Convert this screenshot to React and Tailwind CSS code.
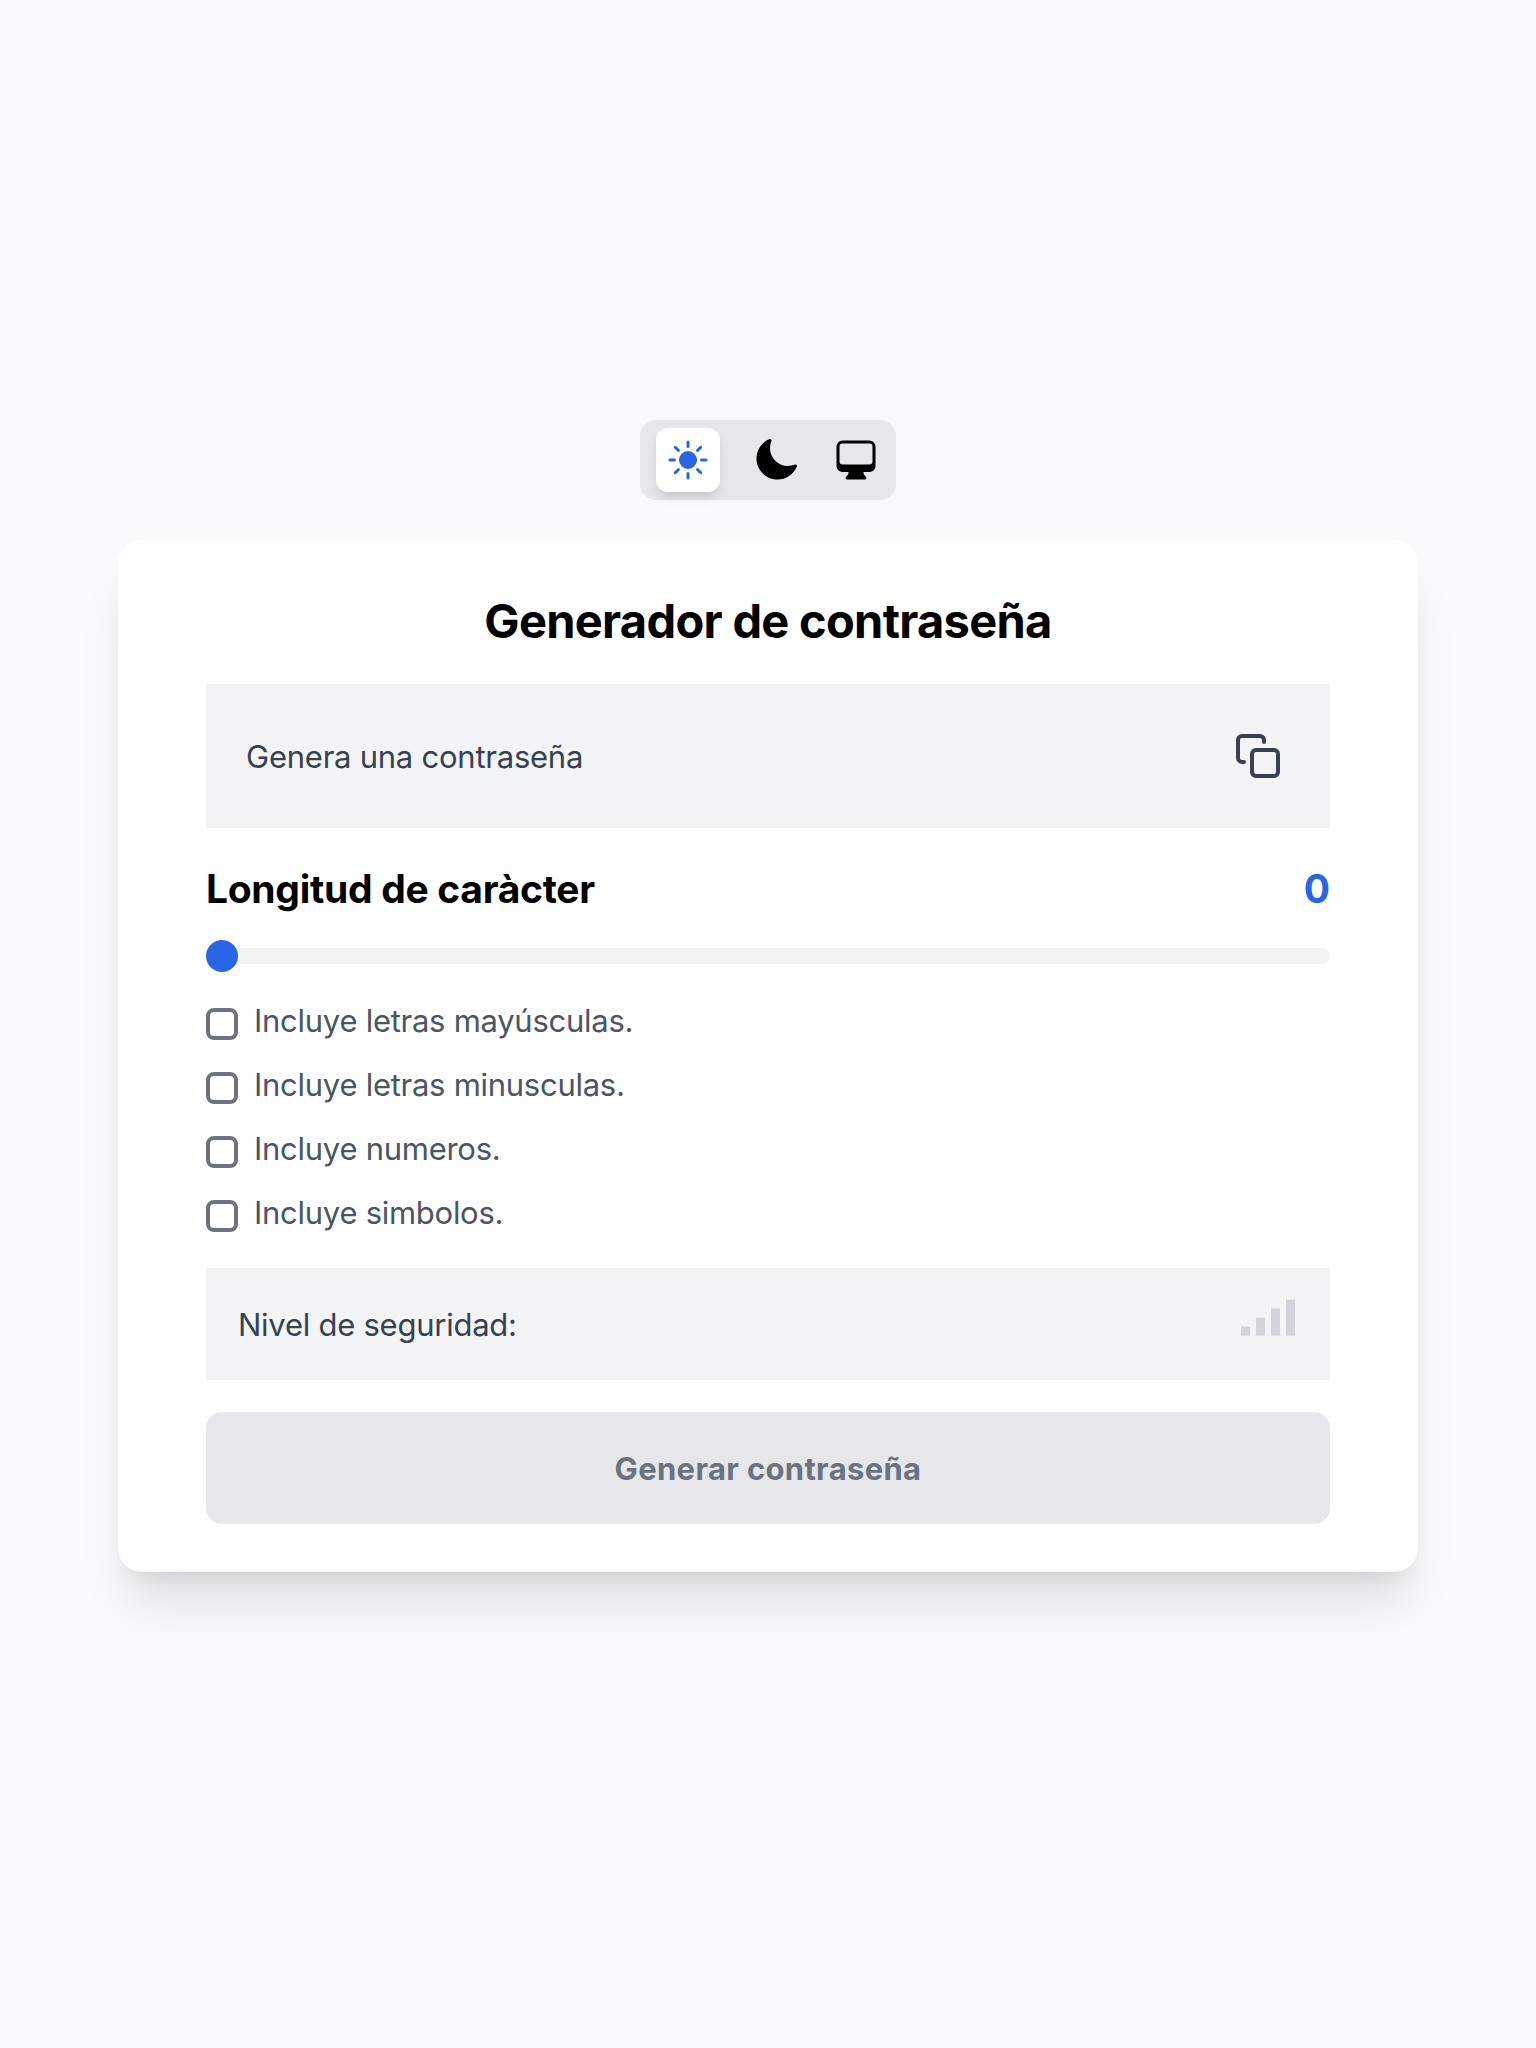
import { useState } from "react";
import { HiSun, HiMoon, HiComputerDesktop } from "react-icons/hi2";
import { FiCopy } from "react-icons/fi";

const options = [
  "Incluye letras mayúsculas.",
  "Incluye letras minusculas.",
  "Incluye numeros.",
  "Incluye simbolos.",
];

function ThemeSwitch() {
  return (
    <div className="flex h-20 w-64 items-center gap-8 rounded-2xl bg-[#e5e7eb] px-4 text-black">
      <button
        type="button"
        aria-label="Tema claro"
        className="flex size-16 items-center justify-center rounded-xl bg-white text-[#2966e6] shadow-[0_8px_12px_-2px_rgb(0_0_0/0.1),0_4px_8px_-4px_rgb(0_0_0/0.1)]"
      >
        <HiSun className="size-12" />
      </button>
      <button type="button" aria-label="Tema oscuro">
        <HiMoon className="size-12" />
      </button>
      <button type="button" aria-label="Tema del sistema">
        <HiComputerDesktop className="size-12" />
      </button>
    </div>
  );
}

function StrengthBars() {
  return (
    <svg width="54" height="38" viewBox="0 0 54 38" fill="#d1d5db" aria-hidden="true">
      <rect x="0" y="27.6" width="9" height="9" />
      <rect x="15" y="18.6" width="9" height="18" />
      <rect x="30" y="9.6" width="9" height="27" />
      <rect x="45" y="0.6" width="9" height="36" />
    </svg>
  );
}

export default function App() {
  const [length, setLength] = useState(0);

  return (
    <div className="flex min-h-[2048px] flex-col items-center bg-[#f9fafb] pt-[420px] font-['Inter',sans-serif]">
      <ThemeSwitch />

      <main className="mt-10 w-[1300px] rounded-3xl bg-white px-[88px] pt-[49px] pb-12 shadow-[0_40px_50px_-10px_rgb(0_0_0/0.1),0_16px_20px_-12px_rgb(0_0_0/0.1)]">
        <h1 className="text-center text-[47px] leading-[64px] font-bold tracking-[-0.7px] text-black">
          Generador de contraseña
        </h1>

        <div className="mt-[31px] flex h-36 items-center justify-between bg-[#f3f4f6] pr-12 pl-10 text-[#374151]">
          <span className="pt-0.5 text-[31px] leading-10 tracking-[-0.24px]">Genera una contraseña</span>
          <button type="button" aria-label="Copiar">
            <FiCopy className="size-12" />
          </button>
        </div>

        <div className="mt-[33px] flex items-center justify-between text-[39px] leading-[56px] font-bold">
          <h2 className="tracking-[-0.3px] text-black">Longitud de caràcter</h2>
          <span className="text-[#2966e6]">{length}</span>
        </div>

        <div className="mt-[23px] flex h-8 items-center">
          <input
            type="range"
            min="0"
            max="20"
            value={length}
            aria-label="Longitud de caràcter"
            onChange={(e) => setLength(Number(e.target.value))}
            className="h-4 w-full cursor-pointer appearance-none rounded-full bg-[#f3f4f6] [&::-webkit-slider-thumb]:size-8 [&::-webkit-slider-thumb]:appearance-none [&::-webkit-slider-thumb]:rounded-full [&::-webkit-slider-thumb]:bg-[#2966e6]"
          />
        </div>

        <div className="mt-7 flex flex-col gap-6">
          {options.map((label) => (
            <label key={label} className="flex h-10 items-end gap-4">
              <input
                type="checkbox"
                className="size-8 appearance-none rounded-lg border-4 border-[#6b7280] bg-white checked:bg-[#2966e6]"
              />
              <span className="text-[31px] leading-[38px] tracking-[-0.27px] text-[#4b5563]">{label}</span>
            </label>
          ))}
        </div>

        <div className="mt-9 flex h-28 items-start justify-between bg-[#f3f4f6] pt-[31px] pr-[35px] pl-8">
          <span className="pt-[6px] text-[31px] leading-10 tracking-[-0.25px] text-[#374151]">Nivel de seguridad:</span>
          <StrengthBars />
        </div>

        <button
          type="button"
          className="mt-8 h-28 w-full rounded-2xl bg-[#e5e7eb] pt-0.5 text-[31px] font-bold tracking-[0.33px] text-[#6b7280]"
        >
          Generar contraseña
        </button>
      </main>
    </div>
  );
}
